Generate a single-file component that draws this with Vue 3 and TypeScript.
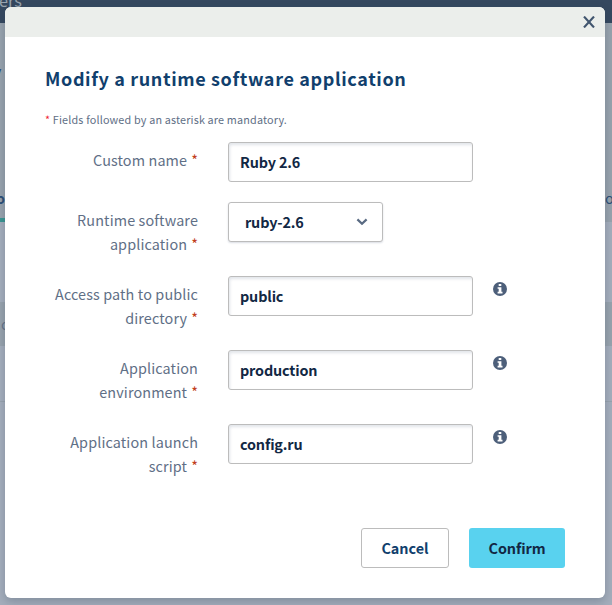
<script setup lang="ts">
import { reactive } from 'vue'

interface Field {
  id: string
  label: string[]
  kind: 'text' | 'select'
  value: string
  info: boolean
}

const fields = reactive<Field[]>([
  { id: 'name', label: ['Custom name'], kind: 'text', value: 'Ruby 2.6', info: false },
  { id: 'runtime', label: ['Runtime software', 'application'], kind: 'select', value: 'ruby-2.6', info: false },
  { id: 'path', label: ['Access path to public', 'directory'], kind: 'text', value: 'public', info: true },
  { id: 'env', label: ['Application', 'environment'], kind: 'text', value: 'production', info: true },
  { id: 'script', label: ['Application launch', 'script'], kind: 'text', value: 'config.ru', info: true },
])
</script>

<template>
  <div class="page">
    <div class="backdrop" aria-hidden="true">
      <div class="bar"><span class="bar-text">ers</span></div>
      <div class="tabs">
        <span class="heading">y</span>
        <span class="tab tab-left">o</span>
        <span class="tab tab-right">o</span>
        <span class="underline"></span>
      </div>
      <div class="gap"></div>
      <div class="band"><span>c</span></div>
      <div class="row"></div>
    </div>

    <section class="modal" role="dialog">
      <header class="modal-header">
        <button class="close" type="button" aria-label="Close">
          <svg width="12" height="12" viewBox="0 0 12 12"><path d="M1 0.6 11 11.4M11 0.6 1 11.4" /></svg>
        </button>
      </header>
      <div class="modal-body">
        <h1 class="title">Modify a runtime software application</h1>
        <p class="hint"><span class="star">*</span> Fields followed by an asterisk are mandatory.</p>
        <form class="form">
          <div v-for="field in fields" :key="field.id" class="field">
            <label class="label" :for="field.id">
              <span v-for="(line, i) in field.label" :key="i" class="line"
                >{{ line }}<span v-if="i === field.label.length - 1" class="required">*</span></span>
            </label>
            <input v-if="field.kind === 'text'" :id="field.id" v-model="field.value" class="input" type="text" spellcheck="false" />
            <button v-else :id="field.id" class="select" type="button">
              <span>{{ field.value }}</span>
              <svg width="12" height="8" viewBox="0 0 12 8"><path d="M1.4 1.4 6 5.8 10.6 1.4" /></svg>
            </button>
            <svg v-if="field.info" class="info" width="14" height="14" viewBox="0 0 14 14">
              <circle cx="7" cy="7" r="7" />
              <path d="M5.7 2h2.6v2.1H5.7zM4.6 5.2h3.8v4.6h1.1v1.6H4.6V9.8h1.1V6.8H4.6z" />
            </svg>
          </div>
        </form>
        <footer class="actions">
          <button class="btn cancel" type="button">Cancel</button>
          <button class="btn confirm" type="button">Confirm</button>
        </footer>
      </div>
    </section>
  </div>
</template>

<style>
body {
  margin: 0;
  overflow: hidden;
}
</style>

<style scoped>
.page {
  position: relative;
  box-sizing: border-box;
  width: 612px;
  height: 605px;
  padding: 7px 7px 7px 5px;
  overflow: hidden;
  color: #5f6f86;
  font-family: 'Noto Sans CJK JP', 'Noto Sans', sans-serif;
  font-size: 14.4px;
}
.backdrop {
  position: absolute;
  inset: 0;
  display: flex;
  flex-direction: column;
  background: #a5aebc;
}
.bar {
  height: 23px;
  overflow: hidden;
  background: #35485f;
}
.bar-text {
  display: block;
  margin: -12px 0 0 -1px;
  color: #98a3ad;
  font-size: 16.2px;
  line-height: 24px;
}
.tabs {
  position: relative;
  height: 199px;
  background: #98a3ad;
}
.heading,
.tab,
.underline {
  position: absolute;
  color: #2e4f76;
  line-height: 24px;
}
.heading {
  top: 36px;
  left: -8px;
  font-size: 18px;
}
.tab {
  top: 163px;
}
.tab-left {
  left: -4px;
  font-weight: 700;
}
.tab-right {
  left: 605px;
}
.underline {
  bottom: 0;
  left: 0;
  width: 8px;
  height: 4px;
  background: #3b9692;
}
.gap {
  height: 80px;
}
.band {
  height: 44px;
  padding-left: 1px;
  background: #98a3ad;
  color: #66758a;
  line-height: 44px;
}
.row {
  height: 55px;
  border-bottom: 1px solid #98a3ad;
}
.modal {
  position: relative;
  width: 600px;
  height: 591px;
  overflow: hidden;
  border-radius: 6px;
  background: #fff;
  box-shadow: 0 4px 10px rgba(30, 50, 70, 0.25);
}
.modal-header {
  display: flex;
  align-items: center;
  justify-content: flex-end;
  height: 30px;
  padding-right: 10px;
  background: #ebeeeb;
}
.close {
  display: flex;
  padding: 0;
  border: 0;
  background: none;
}
.close path {
  fill: none;
  stroke: #42566f;
  stroke-width: 2.2;
}
.modal-body {
  padding: 27px 40px 0;
}
.title {
  margin: 0;
  color: #113f6d;
  font-size: 18px;
  font-weight: 700;
  line-height: 28px;
  letter-spacing: 0.63px;
  white-space: nowrap;
}
.hint {
  margin: 18px 0 0;
  font-size: 10.8px;
  line-height: 18px;
  letter-spacing: 0.17px;
  white-space: nowrap;
}
.hint .star {
  color: #f01c38;
}
.form {
  display: flex;
  flex-direction: column;
  gap: 20px;
  margin-top: 14px;
}
.field {
  display: flex;
  align-items: flex-start;
  min-height: 40px;
}
.label {
  width: 153px;
  margin-right: 30px;
  padding-top: 6px;
  line-height: 24px;
  letter-spacing: 0.12px;
  text-align: right;
}
.line {
  display: block;
  white-space: nowrap;
}
.required {
  margin-left: 4px;
  color: #c1401b;
}
.input,
.select {
  box-sizing: border-box;
  height: 40px;
  margin: 0;
  border: 1px solid #bcbcbc;
  border-radius: 3px;
  outline: none;
  background: #fff;
  color: #122844;
  font: inherit;
  font-weight: 700;
  letter-spacing: -0.15px;
}
.input {
  width: 245px;
  padding: 0 11px 2px;
  box-shadow: inset 1px 2px 3px rgba(20, 40, 80, 0.12);
}
.select {
  display: flex;
  align-items: center;
  justify-content: space-between;
  width: 155px;
  padding: 0 14px 0 16px;
  box-shadow: 0 1px 2px rgba(20, 40, 80, 0.16);
}
.select span {
  padding-bottom: 2px;
}
.select path {
  fill: none;
  stroke: #5a6b83;
  stroke-width: 2.2;
}
.info {
  margin: 6px 0 0 20px;
}
.info circle {
  fill: #4d5f7a;
}
.info path {
  fill: #fff;
}
.actions {
  display: flex;
  justify-content: flex-end;
  gap: 20px;
  margin-top: 50px;
}
.btn {
  box-sizing: border-box;
  height: 40px;
  padding: 0 0 2px;
  border: 0;
  border-radius: 3px;
  font: inherit;
  font-weight: 700;
}
.cancel {
  width: 88px;
  border: 1px solid #bcbcbc;
  background: #fff;
  color: #113f6d;
}
.confirm {
  width: 96px;
  background: #59d2ef;
  color: #122844;
  letter-spacing: -0.1px;
}
</style>
